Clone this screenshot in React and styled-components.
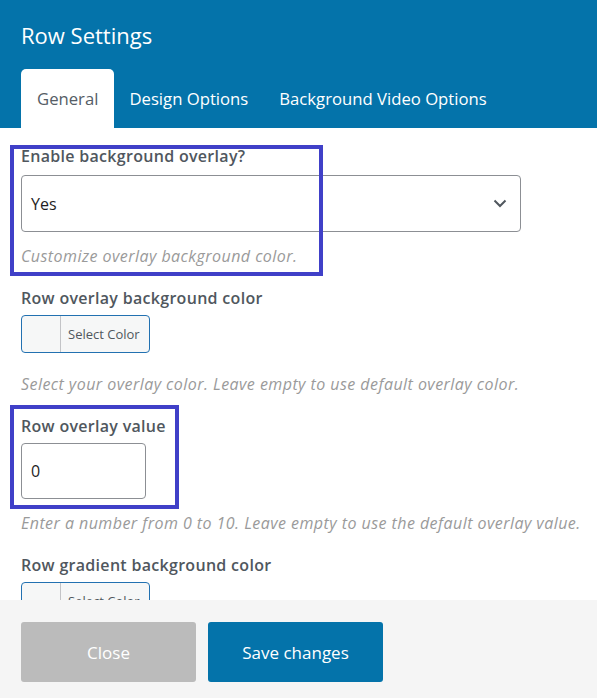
import React from 'react'
import styled, { createGlobalStyle } from 'styled-components'

const GlobalStyle = createGlobalStyle`
    * { box-sizing: border-box; }
    body {
        margin: 0;
        font-family: "Open Sans", "Noto Sans", sans-serif;
        background: #ffffff;
    }
`

const Modal = styled.div`
    width: 597px;
    height: 698px;
    display: flex;
    flex-direction: column;
    overflow: hidden;
`
const Header = styled.div`
    background: #0473aa;
    padding: 18px 21px 0;
    display: flex;
    flex-direction: column;
`
const Title = styled.h1`
    margin: 0;
    font-size: 22px;
    font-weight: 400;
    line-height: 34px;
    color: #ffffff;
`
const Tabs = styled.div`
    display: flex;
    margin-top: 17px;
`
const Tab = styled.div`
    height: 59px;
    padding: 0 ${p => (p.$active ? 16 : 15)}px;
    display: flex;
    align-items: center;
    font-size: 16.7px;
    color: ${p => (p.$active ? '#555d66' : '#ffffff')};
    background: ${p => (p.$active ? '#ffffff' : 'transparent')};
    border-radius: 5px 5px 0 0;
    margin-right: ${p => p.$gap || 0}px;
`
const Body = styled.div`
    flex: 1;
    overflow: hidden;
    padding: 17px 21px 0;
`
const Field = styled.div`
    position: relative;
    margin-bottom: 20px;
`
const Label = styled.div`
    font-size: 16px;
    font-weight: 600;
    line-height: 22px;
    letter-spacing: 0.3px;
    color: #50575e;
    margin-bottom: ${p => p.$gap || 6}px;
`
const Help = styled.div`
    font-size: 16px;
    font-style: italic;
    line-height: 22px;
    letter-spacing: 0.45px;
    color: #9a9a9a;
    white-space: nowrap;
    margin-top: ${p => p.$gap || 13}px;
`
const SelectBox = styled.div`
    width: 500px;
    height: 57px;
    border: 1px solid #8c8f94;
    border-radius: 4px;
    display: flex;
    align-items: center;
    justify-content: space-between;
    padding: 0 13px 0 9px;
    font-size: 16px;
    color: #1e1e1e;
`
const TextInput = styled.div`
    width: 125px;
    height: 56px;
    border: 1px solid #8c8f94;
    border-radius: 4px;
    display: flex;
    align-items: center;
    padding: 0 9px;
    font-size: 16px;
    color: #1e1e1e;
`
const ColorButton = styled.div`
    width: 129px;
    height: 38px;
    border: 1px solid #2271b1;
    border-radius: 4px;
    background: #f6f7f7;
    display: flex;
    overflow: hidden;
`
const Swatch = styled.div`
    width: 39px;
    border-right: 1px solid #c3c4c7;
`
const ColorText = styled.div`
    flex: 1;
    display: flex;
    align-items: center;
    padding-left: 7px;
    font-size: 13px;
    color: #50575e;
`
const Highlight = styled.div`
    position: absolute;
    left: ${p => p.$left}px;
    top: ${p => p.$top}px;
    width: ${p => p.$w}px;
    height: ${p => p.$h}px;
    border: 4px solid #4040c8;
    pointer-events: none;
`
const Footer = styled.div`
    height: 98px;
    background: #f5f5f5;
    padding: 22px 21px;
    display: flex;
    gap: 12px;
`
const Button = styled.button`
    width: 175px;
    height: 60px;
    border: none;
    border-radius: 3px;
    font-family: inherit;
    font-size: 17px;
    color: #ffffff;
    background: ${p => (p.$primary ? '#0473aa' : '#bbbbbb')};
`

const Chevron = () => (
    <svg width="14" height="9" viewBox="0 0 14 9" fill="none">
        <path d="M1.5 1.5 L7 7 L12.5 1.5" stroke="#50575e" strokeWidth="2" />
    </svg>
)

const App = () => {
    return (
        <>
            <GlobalStyle />
            <Modal>
                <Header>
                    <Title>Row Settings</Title>
                    <Tabs>
                        <Tab $active>General</Tab>
                        <Tab $gap={1}>Design Options</Tab>
                        <Tab>Background Video Options</Tab>
                    </Tabs>
                </Header>
                <Body>
                    <Field>
                        <Label $gap={8}>Enable background overlay?</Label>
                        <SelectBox>
                            <span>Yes</span>
                            <Chevron />
                        </SelectBox>
                        <Help>Customize overlay background color.</Help>
                        <Highlight $left={-11} $top={0} $w={313} $h={131} />
                    </Field>
                    <Field>
                        <Label>Row overlay background color</Label>
                        <ColorButton>
                            <Swatch />
                            <ColorText>Select Color</ColorText>
                        </ColorButton>
                        <Help $gap={20}>Select your overlay color. Leave empty to use default overlay color.</Help>
                    </Field>
                    <Field>
                        <Label>Row overlay value</Label>
                        <TextInput>0</TextInput>
                        <Help>Enter a number from 0 to 10. Leave empty to use the default overlay value.</Help>
                        <Highlight $left={-11} $top={-10} $w={169} $h={104} />
                    </Field>
                    <Field>
                        <Label>Row gradient background color</Label>
                        <ColorButton>
                            <Swatch />
                            <ColorText>Select Color</ColorText>
                        </ColorButton>
                    </Field>
                </Body>
                <Footer>
                    <Button>Close</Button>
                    <Button $primary>Save changes</Button>
                </Footer>
            </Modal>
        </>
    )
}

export default App
